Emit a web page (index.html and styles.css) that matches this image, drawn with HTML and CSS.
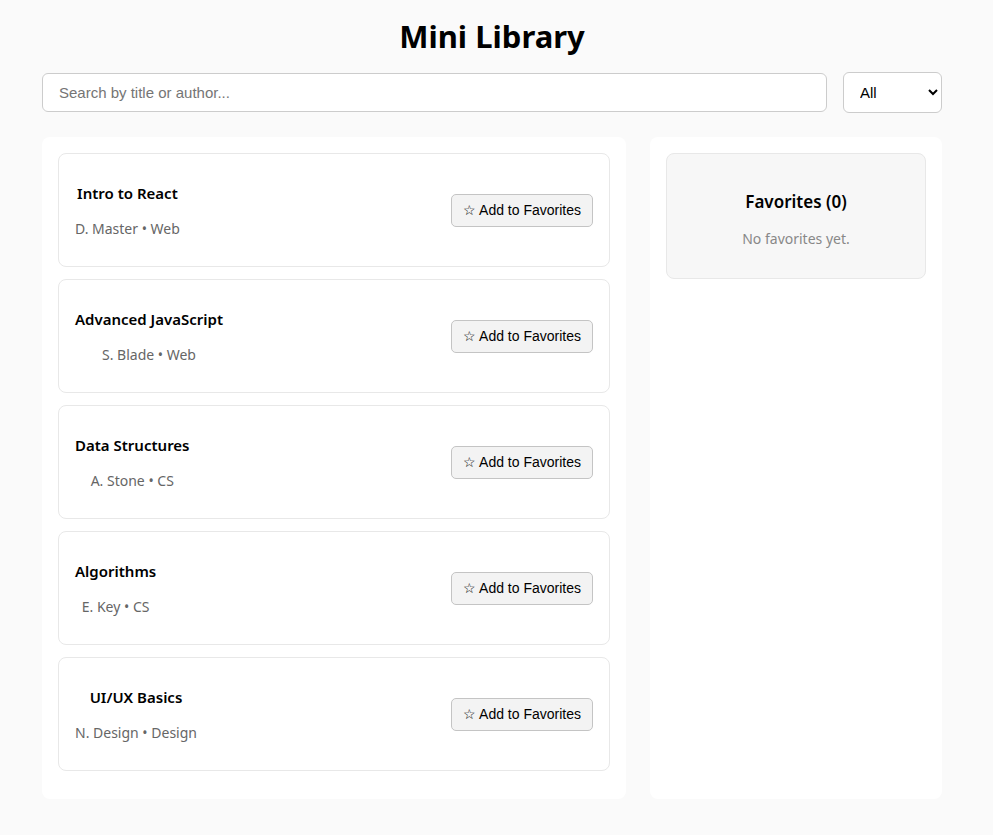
FILE: index.html
```html
<!DOCTYPE html>
<html lang="en">
<head>
<meta charset="utf-8">
<title>Mini Library</title>
<link rel="stylesheet" href="styles.css">
</head>
<body>
<div class="app">
  <h1 class="title">Mini Library</h1>
  <div class="controls">
    <input class="search" type="text" placeholder="Search by title or author...">
    <select class="filter">
      <option>All</option>
      <option>Web</option>
      <option>CS</option>
      <option>Design</option>
    </select>
  </div>
  <div class="main">
    <div class="panel list">
      <div class="card">
        <div class="info"><h3>Intro to React</h3><p>D. Master • Web</p></div>
        <button class="fav-btn">☆ Add to Favorites</button>
      </div>
      <div class="card">
        <div class="info"><h3>Advanced JavaScript</h3><p>S. Blade • Web</p></div>
        <button class="fav-btn">☆ Add to Favorites</button>
      </div>
      <div class="card">
        <div class="info"><h3>Data Structures</h3><p>A. Stone • CS</p></div>
        <button class="fav-btn">☆ Add to Favorites</button>
      </div>
      <div class="card">
        <div class="info"><h3>Algorithms</h3><p>E. Key • CS</p></div>
        <button class="fav-btn">☆ Add to Favorites</button>
      </div>
      <div class="card">
        <div class="info"><h3>UI/UX Basics</h3><p>N. Design • Design</p></div>
        <button class="fav-btn">☆ Add to Favorites</button>
      </div>
    </div>
    <div class="panel side">
      <div class="favorites">
        <h2>Favorites (0)</h2>
        <p>No favorites yet.</p>
      </div>
    </div>
  </div>
</div>
</body>
</html>
```

FILE: styles.css
```css
* { box-sizing: border-box; }
body {
  margin: 0;
  background: #fafafa;
  font-family: "Noto Sans", "Open Sans", sans-serif;
  color: #000;
}
.app {
  width: 900px;
  margin: 0 0 0 42px;
  padding-top: 16px;
}
.title {
  margin: 0 0 16px;
  text-align: center;
  font-size: 31px;
  font-weight: 700;
  line-height: 40px;
}
.controls {
  display: flex;
  gap: 16px;
  align-items: center;
}
.search {
  flex: 1;
  height: 39px;
  padding: 0 16px;
  border: 1px solid #ccc;
  border-radius: 6px;
  background: #fff;
  font-family: "Liberation Sans", Arial, sans-serif;
  font-size: 15px;
  color: #000;
}
.search::placeholder { color: #757575; }
.filter {
  width: 99px;
  height: 41px;
  padding: 0 12px;
  border: 1px solid #ccc;
  border-radius: 6px;
  background: #fff;
  font-family: "Liberation Sans", Arial, sans-serif;
  font-size: 15px;
  color: #000;
}
.main {
  display: grid;
  grid-template-columns: 2fr 1fr;
  gap: 24px;
  margin-top: 24px;
  align-items: start;
}
.panel {
  background: #fff;
  border-radius: 8px;
  padding: 16px;
}
.list { padding-bottom: 16px; }
.card {
  display: flex;
  align-items: center;
  justify-content: space-between;
  border: 1px solid #e8e8e8;
  border-radius: 8px;
  padding: 16px;
  height: 114px;
  margin-bottom: 12px;
}
.info {
  text-align: center;
  margin-top: 2px;
}
.info h3 {
  margin: 0 0 16px;
  font-size: 15px;
  font-weight: 600;
  line-height: 20px;
}
.info p {
  margin: 0;
  font-size: 14px;
  line-height: 20px;
  color: #666;
}
.fav-btn {
  height: 33px;
  padding: 0 11px;
  border: 1px solid #c4c4c4;
  border-radius: 5px;
  background: #f3f3f3;
  font-family: "Liberation Sans", Arial, sans-serif;
  font-size: 14px;
  color: #000;
}
.side { height: 662px; }
.favorites {
  background: #f7f7f7;
  border: 1px solid #e8e8e8;
  border-radius: 8px;
  height: 126px;
  text-align: center;
  padding-top: 36px;
}
.favorites h2 {
  margin: 0 0 15px;
  font-size: 17px;
  font-weight: 600;
  line-height: 24px;
}
.favorites p {
  margin: 0;
  font-size: 14px;
  line-height: 20px;
  color: #888;
}
```
